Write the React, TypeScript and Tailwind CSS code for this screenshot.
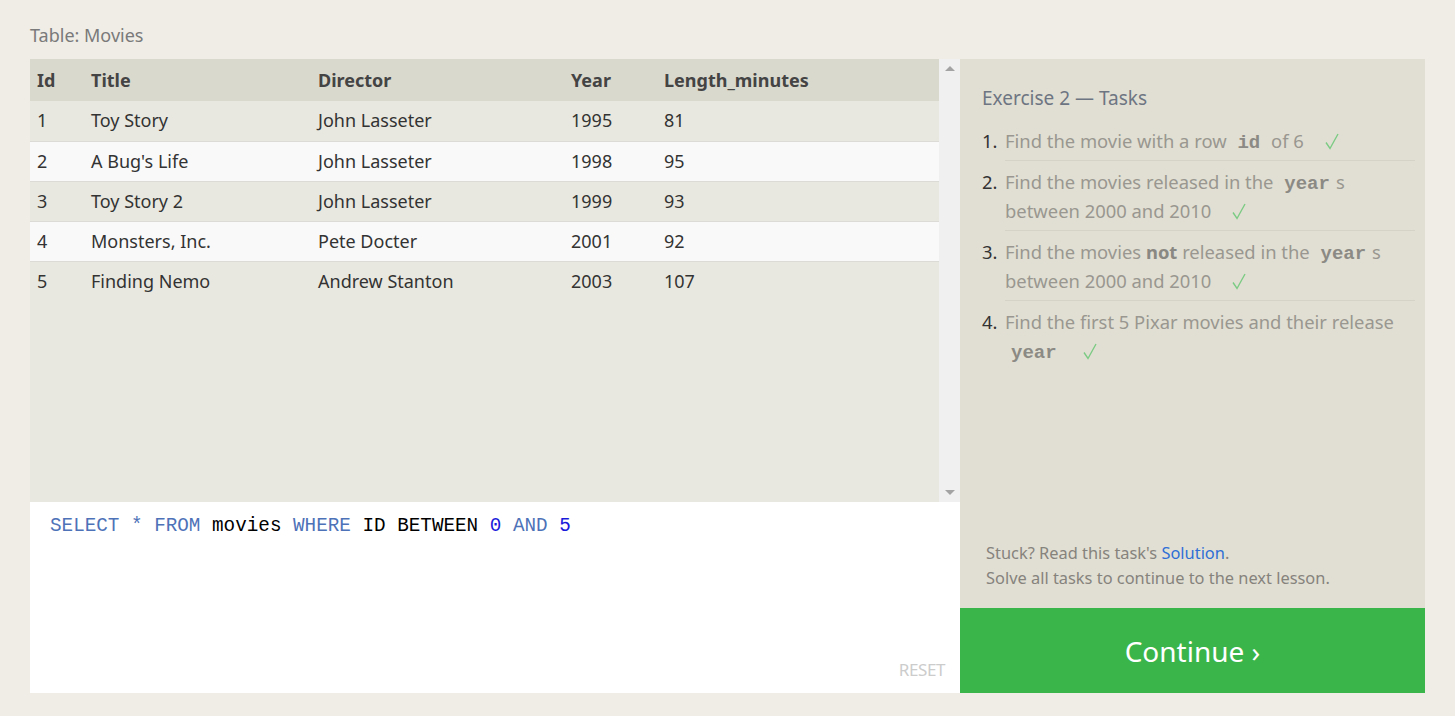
import React from 'react'

const movies = [
  { id: 1, title: 'Toy Story', director: 'John Lasseter', year: 1995, length: 81 },
  { id: 2, title: "A Bug's Life", director: 'John Lasseter', year: 1998, length: 95 },
  { id: 3, title: 'Toy Story 2', director: 'John Lasseter', year: 1999, length: 93 },
  { id: 4, title: 'Monsters, Inc.', director: 'Pete Docter', year: 2001, length: 92 },
  { id: 5, title: 'Finding Nemo', director: 'Andrew Stanton', year: 2003, length: 107 },
]

const sans = "font-['Noto_Sans',sans-serif]"
const mono = "font-['Liberation_Mono',monospace]"

function Check() {
  return (
    <svg className="inline-block ml-4 align-[-2px]" width="14" height="17" viewBox="0 0 14 17" fill="none">
      <polyline points="1,9.5 5,15.5 13,1" stroke="#7ccb84" strokeWidth="1.4" />
    </svg>
  )
}

function Code({ children }: { children: React.ReactNode }) {
  return <code className={`${mono} font-bold text-[19px] leading-none text-[#8c8a84] px-1.5`}>{children}</code>
}

function Task({ n, last, children }: { n: number; last?: boolean; children: React.ReactNode }) {
  return (
    <li className="flex">
      <span className="w-[23px] text-[#333] pt-[6px]">{n}.</span>
      <div className={`flex-1 pt-[6px] pb-[5px] ${last ? '' : 'border-b border-[#d5d3c8]'}`}>{children}</div>
    </li>
  )
}

export default function App() {
  return (
    <div className={`min-h-screen bg-[#efede6] ${sans} pt-[22px] px-[30px]`}>
      {/* Header */}
      <div className="text-[18px] text-[#7a7a7a] leading-[26px] mb-[11px]">Table: Movies</div>

      <div className="flex h-[634px]">
        {/* Left side: table + editor */}
        <div className="flex flex-col w-[930px]">
          <div className="flex h-[443px] bg-[#e9e8e0]">
            <div className="flex-1">
              <table className="w-full text-left text-[18px] border-collapse">
                <thead>
                  <tr className="bg-[#dad9cd] h-[42px] text-[#444]">
                    <th className="font-bold pl-[7px] w-[61px]">Id</th>
                    <th className="font-bold w-[227px]">Title</th>
                    <th className="font-bold w-[253px]">Director</th>
                    <th className="font-bold w-[93px]">Year</th>
                    <th className="font-bold">Length_minutes</th>
                  </tr>
                </thead>
                <tbody className="text-[#333]">
                  {movies.map((m, i) => (
                    <tr
                      key={m.id}
                      className={`h-[40px] ${i < movies.length - 1 ? 'border-b border-[#dcdbd5]' : ''} ${i % 2 === 0 ? 'bg-[#e9e8e0]' : 'bg-[#f9f9f9]'}`}
                    >
                      <td className="pl-[7px]">{m.id}</td>
                      <td>{m.title}</td>
                      <td>{m.director}</td>
                      <td>{m.year}</td>
                      <td>{m.length}</td>
                    </tr>
                  ))}
                </tbody>
              </table>
            </div>
            {/* Scrollbar */}
            <div className="w-[21px] bg-[#f0f0f0] flex flex-col justify-between items-center py-[7px]">
              <div className="w-0 h-0 border-l-[5px] border-r-[5px] border-b-[5px] border-l-transparent border-r-transparent border-b-[#a3a3a3]" />
              <div className="w-0 h-0 border-l-[5px] border-r-[5px] border-t-[5px] border-l-transparent border-r-transparent border-t-[#a3a3a3]" />
            </div>
          </div>

          {/* Editor */}
          <div className="flex-1 bg-white flex flex-col justify-between pl-[20px] pr-[15px] pt-[12px] pb-[11px]">
            <div className={`${mono} text-[19.3px] leading-[24px] whitespace-pre`}>
              <span className="text-[#4e72b8]">SELECT</span>
              <span className="text-[#4e72b8]"> * </span>
              <span className="text-[#4e72b8]">FROM</span>
              <span className="text-black"> movies </span>
              <span className="text-[#4e72b8]">WHERE</span>
              <span className="text-black"> ID BETWEEN </span>
              <span className="text-[#1a1adb]">0</span>
              <span className="text-black"> </span>
              <span className="text-[#4e72b8]">AND</span>
              <span className="text-black"> </span>
              <span className="text-[#1a1adb]">5</span>
            </div>
            <div className="self-end text-[17px] text-[#cccccc] uppercase tracking-tight">Reset</div>
          </div>
        </div>

        {/* Right side: tasks */}
        <div className="w-[465px] flex flex-col bg-[#e1dfd3]">
          <div className="flex-1 flex flex-col justify-between pl-[22px] pr-[10px] pt-[26px] pb-[18px]">
            <div>
              <h3 className="text-[19px] text-[#6e7582] leading-[26px] mb-[9px]">Exercise 2 — Tasks</h3>
              <ol className="text-[18.4px] leading-[29px] text-[#999790]">
                <Task n={1}>
                  Find the movie with a row <Code>id</Code> of 6 <Check />
                </Task>
                <Task n={2}>
                  Find the movies released in the <Code>year</Code>s between 2000 and 2010 <Check />
                </Task>
                <Task n={3}>
                  Find the movies <b className="text-[#8a8882]">not</b> released in the <Code>year</Code>s between
                  2000 and 2010 <Check />
                </Task>
                <Task n={4} last>
                  Find the first 5 Pixar movies and their release <Code>year</Code> <Check />
                </Task>
              </ol>
            </div>
            <div className="text-[16.4px] leading-[25px] text-[#86837d] pl-[4px]">
              <div>
                Stuck? Read this task's <a className="text-[#2f6fd6]">Solution</a>.
              </div>
              <div>Solve all tasks to continue to the next lesson.</div>
            </div>
          </div>
          <button className="h-[85px] bg-[#3ab54a] text-white text-[28px] flex items-center justify-center">
            Continue ›
          </button>
        </div>
      </div>
    </div>
  )
}
